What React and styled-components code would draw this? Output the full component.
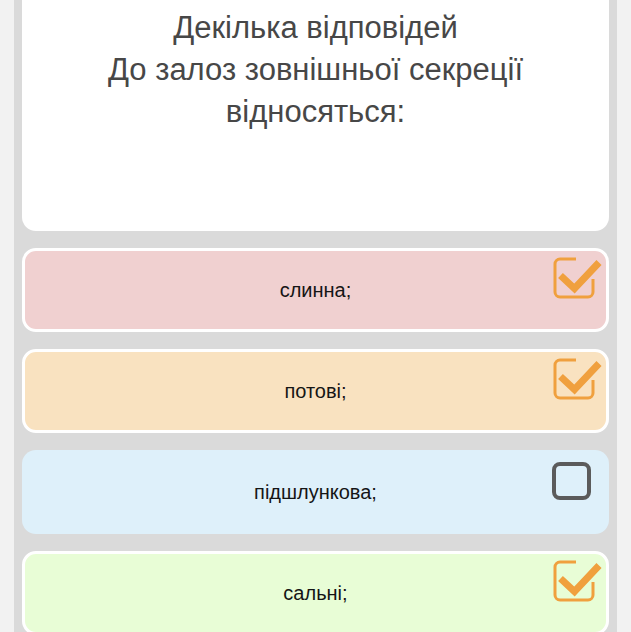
import React from "react";
import styled, { createGlobalStyle } from "styled-components";

const GlobalStyle = createGlobalStyle`
  html, body {
    margin: 0;
    padding: 0;
    background: #f2f2f2;
    overflow: hidden;
    font-family: "Liberation Sans", Arial, sans-serif;
  }
`;

const Panel = styled.div`
  margin: 0 14px;
  padding: 0 8px 40px;
  background: #dadada;
  min-height: 700px;
  display: flex;
  flex-direction: column;
  gap: 17px;
`;

const QuestionCard = styled.div`
  height: 231px;
  box-sizing: border-box;
  background: #fff;
  border-radius: 0 0 14px 14px;
  padding-top: 7px;
  text-align: center;
  color: #474747;
  font-size: 31px;
  line-height: 42px;
`;

const Option = styled.div`
  position: relative;
  height: 84px;
  box-sizing: border-box;
  border-radius: 14px;
  border: 3px solid ${(p) => (p.$checked ? "#fff" : "transparent")};
  background: ${(p) => p.$bg};
  display: flex;
  align-items: center;
  justify-content: center;
  color: #151515;
  font-size: 20px;
`;

const Mark = styled.svg`
  position: absolute;
  top: 4px;
  right: 4px;
`;

const CheckBox = ({ checked }) =>
  checked ? (
    <Mark width="50" height="46" viewBox="0 0 50 46">
      <path
        d="M24 4 H8 A5 5 0 0 0 3 9 V37 A5 5 0 0 0 8 42 H36 A5 5 0 0 0 41 37 V24"
        fill="none"
        stroke="#f0a03e"
        strokeWidth="3"
      />
      <path
        d="M8.5 20.5 L22.5 33.5 L47 7.5"
        fill="none"
        stroke="#f0a03e"
        strokeWidth="7"
        strokeLinejoin="miter"
      />
    </Mark>
  ) : (
    <Mark width="50" height="46" viewBox="0 0 50 46">
      <rect
        x="2"
        y="7"
        width="35"
        height="34"
        rx="6"
        fill="none"
        stroke="#5b5b5b"
        strokeWidth="4"
      />
    </Mark>
  );

const options = [
  { text: "слинна;", bg: "#f0d0d0", checked: true },
  { text: "потові;", bg: "#f9e2c0", checked: true },
  { text: "підшлункова;", bg: "#def0fa", checked: false },
  { text: "сальні;", bg: "#e8fdd6", checked: true },
];

export default function App() {
  return (
    <>
      <GlobalStyle />
      <Panel>
        <QuestionCard>
          Декілька відповідей
          <br />
          До залоз зовнішньої секреції
          <br />
          відносяться:
        </QuestionCard>
        {options.map((o) => (
          <Option key={o.text} $bg={o.bg} $checked={o.checked}>
            {o.text}
            <CheckBox checked={o.checked} />
          </Option>
        ))}
      </Panel>
    </>
  );
}
